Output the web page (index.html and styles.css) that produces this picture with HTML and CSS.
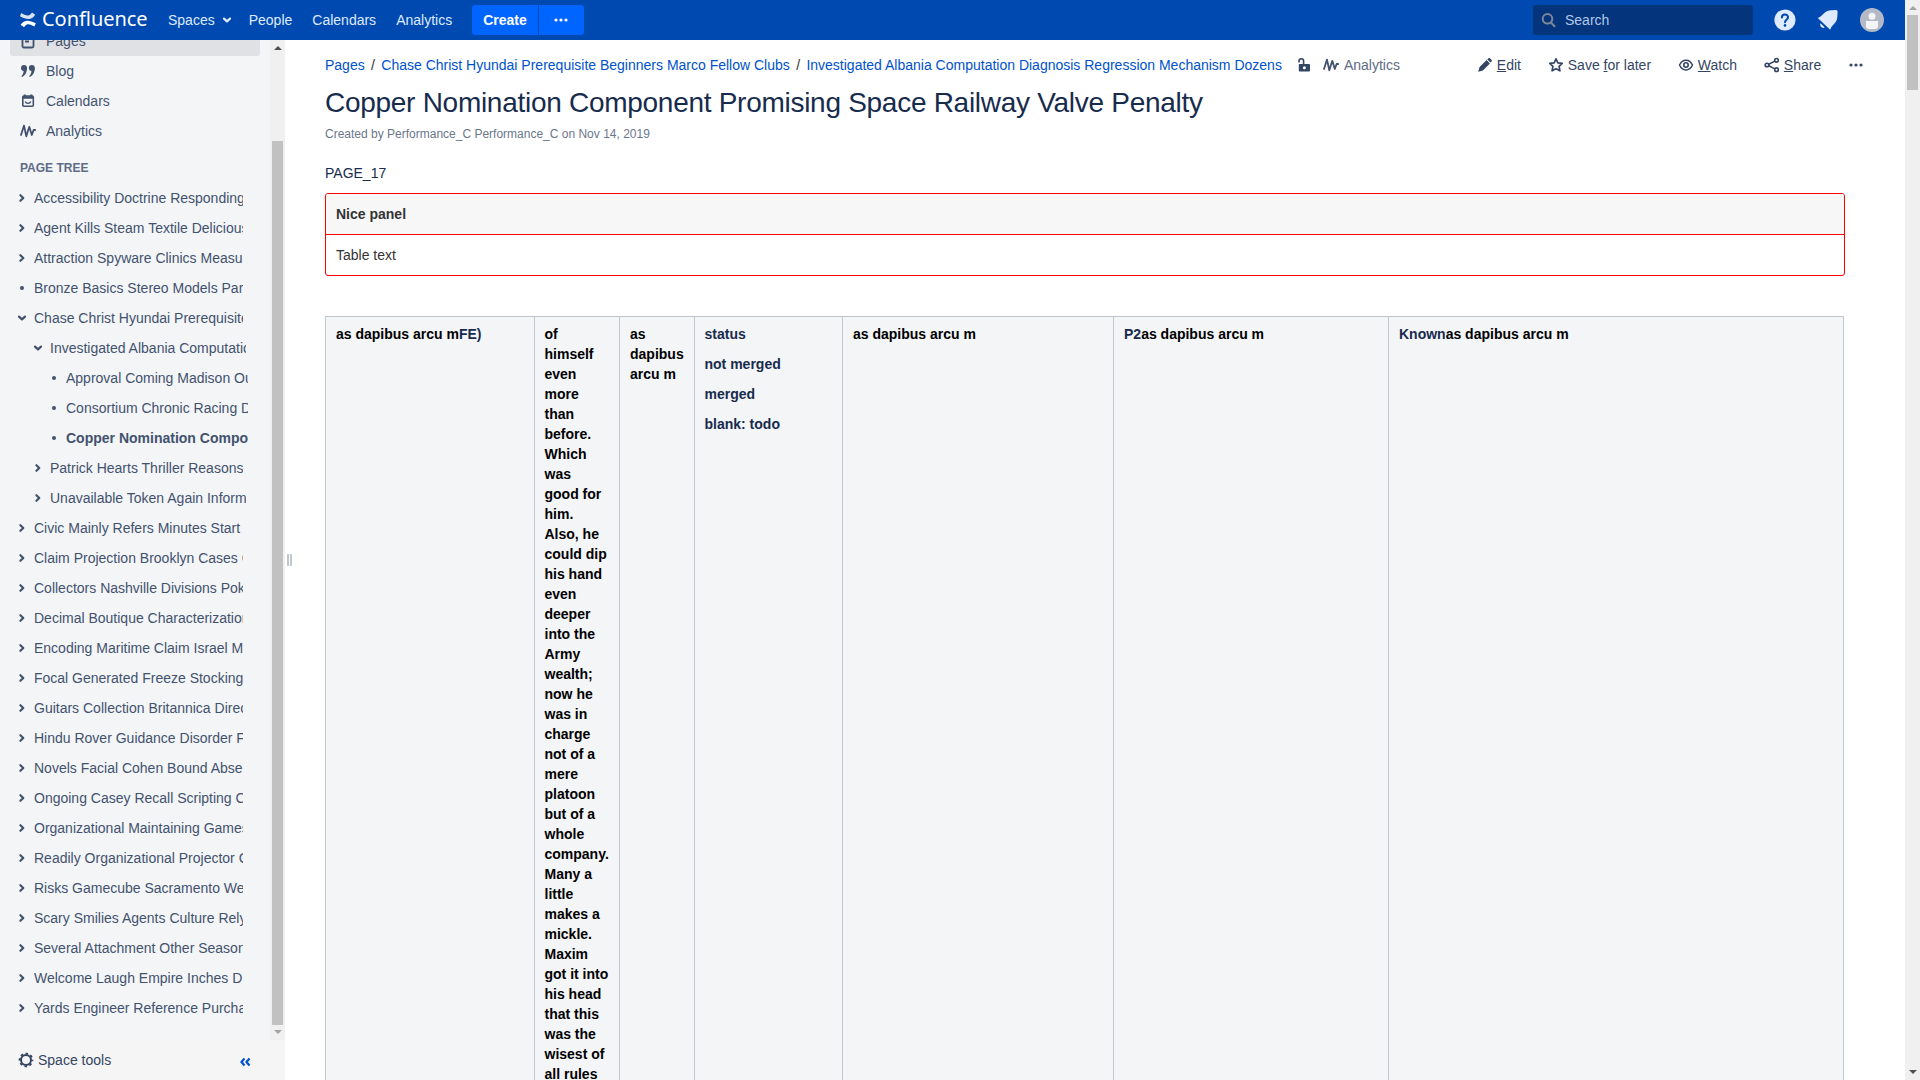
FILE: index.html
```html
<!DOCTYPE html>
<html lang="en">
<head>
<meta charset="utf-8">
<title>Copper Nomination Component Promising Space Railway Valve Penalty - Confluence</title>
<link rel="stylesheet" href="styles.css">
</head>
<body>
<svg class="defs" width="0" height="0">
  <symbol id="right" viewBox="0 0 10 10"><path d="M3.400 2.200 6.300 5 3.400 7.800" fill="none" stroke="currentColor" stroke-width="2.200" stroke-linecap="round" stroke-linejoin="round"/></symbol>
  <symbol id="down" viewBox="0 0 10 10"><path d="M2 3.600 5 6.400 8 3.600" fill="none" stroke="currentColor" stroke-width="2.200" stroke-linecap="round" stroke-linejoin="round"/></symbol>
  <symbol id="dot" viewBox="0 0 10 10"><circle cx="5" cy="5" r="2" fill="currentColor"/></symbol>
  <symbol id="pulse" viewBox="0 0 16 16"><path d="M1 12 4 2.600 6.300 13.300 9.300 3.800 11.800 12 13.600 7 15.200 7" fill="none" stroke="currentColor" stroke-width="1.800" stroke-linecap="round" stroke-linejoin="round"/></symbol>
  <symbol id="more" viewBox="0 0 16 16"><g fill="currentColor"><circle cx="3" cy="8" r="1.6"/><circle cx="8" cy="8" r="1.6"/><circle cx="13" cy="8" r="1.6"/></g></symbol>
</svg>
<div class="app">
  <div class="window">
    <header class="topbar">
      <a class="logo">
        <svg width="16" height="16" viewBox="0 0 16 16"><path d="M1.200 1C5 3.100 8.600 4.900 11 1.700L12 .4 15.200 2.800C11.500 8.500 7 7.800 0 4.300Z" fill="#fff" opacity=".85"/><path d="M14.400 14.600C11 12.500 7.400 10.700 5 13.900L4 15.300 .6 12.800C4.500 7.200 9 7.900 15.800 11.300Z" fill="#fff"/></svg>
        <span class="wordmark">Confluence</span>
      </a>
      <nav class="nav">
        <a>Spaces<svg class="caret" width="10" height="10"><use href="#down"/></svg></a>
        <a>People</a><a>Calendars</a><a>Analytics</a>
      </nav>
      <div class="create"><button class="create-main">Create</button><button class="create-more"><svg width="16" height="16"><use href="#more"/></svg></button></div>
      <div class="search">
        <svg width="16" height="16" viewBox="0 0 16 16"><g fill="none" stroke="#7a869a" stroke-width="2" stroke-linecap="round"><circle cx="6.500" cy="6.800" r="4.800"/><path d="m10.200 10.700 3.300 3.500"/></g></svg>
        <span>Search</span>
      </div>
      <div class="tools">
        <svg width="22" height="22" viewBox="0 0 22 22"><circle cx="11" cy="11" r="10.600" fill="#deebff"/><path d="M7.900 8.600C7.900 4.400 14 4.600 14 8.300c0 2.400-3 2.500-3 4.900" fill="none" stroke="#0049b0" stroke-width="2" stroke-linecap="round"/><circle cx="11" cy="16.400" r="1.300" fill="#0049b0"/></svg>
        <svg width="22" height="22" viewBox="0 0 22 22"><path d="M.8 9C3 8.200 5 6.200 6.800 4.400 9.300 1.900 12 1 15 1.200L18.300 1Q20.800 .5 20.600 3L20.400 7C20.300 11 19 13 17 15 15 17 13.900 18.500 13.200 20.800ZM3.600 14.300l4.200 4.200C5.500 20 2 17 3.600 14.300Z" fill="#deebff"/></svg>
        <svg width="24" height="24" viewBox="0 0 24 24"><circle cx="12" cy="12" r="12" fill="#b3bac5"/><circle cx="12" cy="8.300" r="3.500" fill="#f4f5f7"/><path d="M6 13h12v5c0 2-1 3-3 3H9c-2 0-3-1-3-3Z" fill="#f4f5f7"/></svg>
      </div>
    </header>
    <div class="body">
      <aside class="sidebar">
        <div class="side-scroll">
          <div class="side-content">
            <ul class="links">
              <li class="current"><svg width="16" height="16" viewBox="0 0 16 16"><g fill="none" stroke="currentColor" stroke-width="1.800"><rect x="2.500" y="1" width="11" height="13.500" rx="1.500"/><path d="M5 5h6M5 8.500h4"/></g></svg>Pages</li>
              <li><svg width="16" height="16" viewBox="0 0 16 16"><g fill="currentColor"><circle cx="4" cy="5" r="3"/><path d="M3.500 6.500 7 5c0 4-1.500 7-4.500 8.800-.8.400-1.400-.4-.8-1C3.200 11.200 4 9 3.500 6.500Z"/><circle cx="11.800" cy="5" r="3"/><path d="m11.300 6.500 3.500-1.500c0 4-1.500 7-4.500 8.800-.8.400-1.400-.4-.8-1 1.500-1.600 2.300-3.800 1.800-6.300Z"/></g></svg>Blog</li>
              <li><svg width="16" height="16" viewBox="0 0 16 16"><rect x="2.800" y="3" width="10.500" height="10.200" rx="1" fill="none" stroke="currentColor" stroke-width="1.600"/><path d="M2.500 3.200h11v2.500h-11ZM3.800 1.500h2v3h-2zM10.300 1.500h2v3h-2z" fill="currentColor"/><path d="M5.200 8.500c1 2.500 4.600 2.500 5.600 0" fill="none" stroke="currentColor" stroke-width="1.400"/></svg>Calendars</li>
              <li><svg width="16" height="16"><use href="#pulse"/></svg>Analytics</li>
            </ul>
            <h2 class="tree-head">PAGE TREE</h2>
            <ul class="tree">
              <li><svg><use href="#right"/></svg><span>Accessibility Doctrine Responding</span></li>
              <li><svg><use href="#right"/></svg><span>Agent Kills Steam Textile Delicious</span></li>
              <li><svg><use href="#right"/></svg><span>Attraction Spyware Clinics Measu</span></li>
              <li><svg><use href="#dot"/></svg><span>Bronze Basics Stereo Models Par</span></li>
              <li><svg><use href="#down"/></svg><span>Chase Christ Hyundai Prerequisite</span></li>
              <li class="l1"><svg><use href="#down"/></svg><span>Investigated Albania Computation</span></li>
              <li class="l2"><svg><use href="#dot"/></svg><span>Approval Coming Madison Out</span></li>
              <li class="l2"><svg><use href="#dot"/></svg><span>Consortium Chronic Racing D</span></li>
              <li class="l2 active"><svg><use href="#dot"/></svg><span>Copper Nomination Component</span></li>
              <li class="l1 short"><svg><use href="#right"/></svg><span>Patrick Hearts Thriller Reasons</span></li>
              <li class="l1"><svg><use href="#right"/></svg><span>Unavailable Token Again Inform</span></li>
              <li><svg><use href="#right"/></svg><span>Civic Mainly Refers Minutes Start</span></li>
              <li><svg><use href="#right"/></svg><span>Claim Projection Brooklyn Cases C</span></li>
              <li><svg><use href="#right"/></svg><span>Collectors Nashville Divisions Pok</span></li>
              <li><svg><use href="#right"/></svg><span>Decimal Boutique Characterization</span></li>
              <li><svg><use href="#right"/></svg><span>Encoding Maritime Claim Israel M</span></li>
              <li><svg><use href="#right"/></svg><span>Focal Generated Freeze Stocking</span></li>
              <li><svg><use href="#right"/></svg><span>Guitars Collection Britannica Direc</span></li>
              <li><svg><use href="#right"/></svg><span>Hindu Rover Guidance Disorder F</span></li>
              <li><svg><use href="#right"/></svg><span>Novels Facial Cohen Bound Abse</span></li>
              <li><svg><use href="#right"/></svg><span>Ongoing Casey Recall Scripting C</span></li>
              <li><svg><use href="#right"/></svg><span>Organizational Maintaining Games</span></li>
              <li><svg><use href="#right"/></svg><span>Readily Organizational Projector C</span></li>
              <li><svg><use href="#right"/></svg><span>Risks Gamecube Sacramento We</span></li>
              <li><svg><use href="#right"/></svg><span>Scary Smilies Agents Culture Rely</span></li>
              <li><svg><use href="#right"/></svg><span>Several Attachment Other Season</span></li>
              <li><svg><use href="#right"/></svg><span>Welcome Laugh Empire Inches D</span></li>
              <li><svg><use href="#right"/></svg><span>Yards Engineer Reference Purcha</span></li>
            </ul>
          </div>
          <div class="bar side-bar"><i class="up"></i><b></b><i class="dn off"></i></div>
        </div>
        <div class="side-foot">
          <svg width="16" height="16" viewBox="0 0 16 16"><circle cx="8" cy="8" r="5" fill="none" stroke="currentColor" stroke-width="2"/><circle cx="8" cy="8" r="6.400" fill="none" stroke="currentColor" stroke-width="1.800" stroke-dasharray="2.500 2.526" stroke-dashoffset="1.250"/></svg>
          <span>Space tools</span>
          <svg class="collapse" width="12" height="10" viewBox="0 0 12 10"><path d="M5.500 1.500 2.500 5l3 3.500M10.500 1.500 7.500 5l3 3.500" fill="none" stroke="#0052cc" stroke-width="2.200"/></svg>
        </div>
      </aside>
      <div class="handle"><i></i><i></i></div>
      <main class="main">
        <div class="page-head">
          <div class="crumbs">
            <a>Pages</a><span class="sep">/</span><a>Chase Christ Hyundai Prerequisite Beginners Marco Fellow Clubs</a><span class="sep">/</span><a>Investigated Albania Computation Diagnosis Regression Mechanism Dozens</a>
            <svg class="lock" width="16" height="16" viewBox="0 0 16 16"><path d="M3 5.500V4a2.300 2.300 0 0 1 4.600 0v3.500" fill="none" stroke="currentColor" stroke-width="1.600"/><path fill-rule="evenodd" d="M3.800 7H13a1 1 0 0 1 1 1v5.500a1 1 0 0 1-1 1H3.800a1 1 0 0 1-1-1V8a1 1 0 0 1 1-1Zm4.600 2.200a1.500 1.500 0 1 0 0 3 1.500 1.500 0 0 0 0-3Z" fill="currentColor"/></svg>
            <svg class="pulse" width="16" height="16"><use href="#pulse"/></svg><span class="grey">Analytics</span>
          </div>
          <div class="actions">
            <a><svg width="16" height="16" viewBox="0 0 16 16"><path d="m10.300 2.400 1-1c.6-.5 1.300-.5 1.800 0l1.400 1.400c.5.500.5 1.200 0 1.800l-1 1ZM9.600 3.100l3.300 3.300-7 7L1.200 14.800 2.600 10.100Z" fill="currentColor"/></svg><span><u>E</u>dit</span></a>
            <a><svg width="16" height="16" viewBox="0 0 16 16"><path d="m8 1.800 1.900 4 4.300.6-3.100 3 .8 4.400L8 11.700l-3.900 2.100.8-4.400-3.100-3 4.300-.6Z" fill="none" stroke="currentColor" stroke-width="1.700" stroke-linejoin="round"/></svg><span>Save <u>f</u>or later</span></a>
            <a><svg width="16" height="16" viewBox="0 0 16 16"><path d="M1.500 8C4.500 1.500 11.500 1.500 14.500 8 11.500 14.500 4.500 14.500 1.500 8Z" fill="none" stroke="currentColor" stroke-width="1.500"/><circle cx="8" cy="8" r="2.200" fill="none" stroke="currentColor" stroke-width="1.600"/></svg><span><u>W</u>atch</span></a>
            <a><svg width="16" height="16" viewBox="0 0 16 16"><g fill="none" stroke="currentColor" stroke-width="1.600"><circle cx="3" cy="8" r="1.800"/><circle cx="12.500" cy="3.300" r="1.800"/><circle cx="12.500" cy="12.700" r="1.800"/><path d="m4.700 7.200 6.200-3.100M4.700 8.800l6.200 3.100"/></g></svg><span><u>S</u>hare</span></a>
            <a><svg width="16" height="16"><use href="#more"/></svg></a>
          </div>
        </div>
        <h1>Copper Nomination Component Promising Space Railway Valve Penalty</h1>
        <p class="meta">Created by Performance_C Performance_C on Nov 14, 2019</p>
        <p class="lead">PAGE_17</p>
        <section class="panel"><div class="panel-head">Nice panel</div><div class="panel-body">Table text</div></section>
        <table>
          <colgroup><col class="c1"><col class="c2"><col class="c3"><col class="c4"><col class="c5"><col class="c6"><col class="c7"></colgroup>
          <tr>
            <th><span>as dapibus arcu m</span>FE)</th>
            <th class="tight"><span>of himself even more than before. Which was good for him. Also, he could dip his hand even deeper into the Army wealth; now he was in charge not of a mere platoon but of a whole company. Many a little makes a mickle. Maxim got it into his head that this was the wisest of all rules</span></th>
            <th><span>as dapibus arcu m</span></th>
            <th class="tight"><p>status</p><p>not merged</p><p>merged</p><p>blank: todo</p></th>
            <th><span>as dapibus arcu m</span></th>
            <th>P2<span>as dapibus arcu m</span></th>
            <th>Known<span>as dapibus arcu m</span></th>
          </tr>
        </table>
      </main>
    </div>
  </div>
  <div class="bar page-bar"><i class="up off"></i><b></b><i class="dn"></i></div>
</div>
</body>
</html>
```
FILE: styles.css
```css
* { box-sizing: border-box; }
body { margin: 0; overflow: hidden; background: #fff; color: #172b4d; font: 14px/20px "Liberation Sans", Arial, sans-serif; }
ul, p, h1, h2 { margin: 0; padding: 0; list-style: none; }
svg { display: block; flex: none; }
.defs { display: none; }
.app { display: flex; width: 1920px; height: 1080px; }
.window { width: 1905px; display: flex; flex-direction: column; }

.topbar { height: 40px; flex: none; display: flex; align-items: center; padding: 0 20px; background: #0049b0; color: #deebff; }
.logo { display: flex; align-items: center; gap: 6px; width: 148px; }
.wordmark { color: #fff; font: 20px/24px "Noto Sans", "Open Sans", sans-serif; letter-spacing: -.05px; margin-top: -2px; }
.nav { display: flex; gap: 20px; width: 304px; }
.nav a { display: flex; align-items: center; }
.caret { margin: 0 -3px 0 7px; }
.create { display: flex; gap: 1px; height: 30px; }
.create button { border: 0; padding: 0; background: #0065ff; color: #fff; font: bold 14px "Liberation Sans", Arial, sans-serif; display: flex; align-items: center; justify-content: center; }
.create-main { width: 66px; border-radius: 3px 0 0 3px; }
.create .create-more { width: 45px; padding-right: 2px; border-radius: 0 3px 3px 0; }
.search { margin-left: auto; width: 220px; height: 30px; display: flex; align-items: center; gap: 8px; padding-left: 8px; border-radius: 3px; background: #03347c; color: #b3c7e8; }
.tools { display: flex; align-items: center; gap: 21px; margin: 0 1px 0 21px; }

.body { flex: 1; display: flex; min-height: 0; }
.sidebar { width: 285px; flex: none; display: flex; flex-direction: column; background: #f4f5f7; color: #42526e; }
.side-scroll { height: 1000px; display: flex; overflow: hidden; }
.side-content { width: 270px; margin-top: -14px; }
.links { padding: 0 10px; }
.links li { height: 30px; display: flex; align-items: center; gap: 10px; padding-left: 10px; border-radius: 3px; }
.links .current { background: #dfe1e5; }
.tree-head { font-size: 12px; line-height: 20px; color: #5e6c84; padding: 12px 20px 5px; }
.tree li { height: 30px; display: flex; align-items: center; gap: 7px; padding-left: 17px; width: 243px; }
.tree svg { width: 10px; height: 10px; }
.tree span { flex: 1; min-width: 0; overflow: hidden; white-space: nowrap; }
.tree .l1 { padding-left: 33px; width: 246px; }
.tree .short { width: 243px; }
.tree .l2 { padding-left: 49px; width: 248px; }
.tree .active { font-weight: bold; }
.side-foot { height: 40px; display: flex; align-items: center; gap: 4px; padding: 0 34px 0 18px; background: #f5f5f5; color: #344563; }
.side-foot .collapse { margin: 3px 0 0 auto; }
.handle { width: 10px; display: flex; align-items: center; gap: 1px; padding-left: 2px; }
.handle i { width: 2px; height: 12px; background: #c1c7d0; }

.bar { width: 15px; flex: none; display: flex; flex-direction: column; align-items: center; background: #f0f0f0; }
.bar b { width: 11px; background: #c1c1c1; }
.bar i { border: 4px solid transparent; height: 0; }
.bar .up { border-bottom-color: #505050; border-top: 0; margin: 6px 0 5px; }
.bar .dn { border-top-color: #505050; border-bottom: 0; margin: auto 0 6px; }
.bar .up.off { border-bottom-color: #a3a3a3; }
.bar .dn.off { border-top-color: #a3a3a3; }
.side-bar b { margin-top: 86px; height: 884px; }
.page-bar b { height: 75px; }

.main { flex: 1; padding: 0 0 0 30px; overflow: hidden; }
.page-head { display: flex; justify-content: space-between; height: 20px; margin-top: 15px; padding-right: 41px; }
.crumbs, .actions, .actions a { display: flex; align-items: center; white-space: nowrap; }
.crumbs a { color: #0052cc; }
.sep { width: 16.6px; text-align: center; color: #333; }
.lock { margin-left: 14px; color: #344563; }
.pulse { margin: 0 5px 0 11px; color: #42526e; }
.grey { color: #5e6c84; }
.actions { gap: 26.8px; color: #344563; }
.actions a { gap: 4px; }
h1 { margin-top: 12px; font-size: 28px; line-height: 32px; font-weight: normal; letter-spacing: -.28px; white-space: nowrap; }
.meta { margin-top: 5px; font-size: 12px; color: #6b778c; }
.lead { margin-top: 19px; }
.panel { width: 1520px; margin-top: 10px; border: 1px solid #f00; border-radius: 3px; color: #333; overflow: hidden; }
.panel-head { height: 41px; padding: 10px; border-bottom: 1px solid #f00; background: #f7f7f7; font-weight: bold; }
.panel-body { height: 40px; padding: 10px; }
table { margin-top: 40px; width: 1519px; height: 800px; table-layout: fixed; border-collapse: collapse; }
th { border: 1px solid #c1c7d0; background: #f4f5f7; padding: 7px 10px; text-align: left; vertical-align: top; }
th.tight { padding-left: 9.5px; }
th span { color: #000; }
th p + p { margin-top: 10px; }
.c1 { width: 209px; }
.c2 { width: 85px; }
.c3 { width: 75px; }
.c4 { width: 148px; }
.c5 { width: 271px; }
.c6 { width: 275px; }
.c7 { width: 455px; }
```
